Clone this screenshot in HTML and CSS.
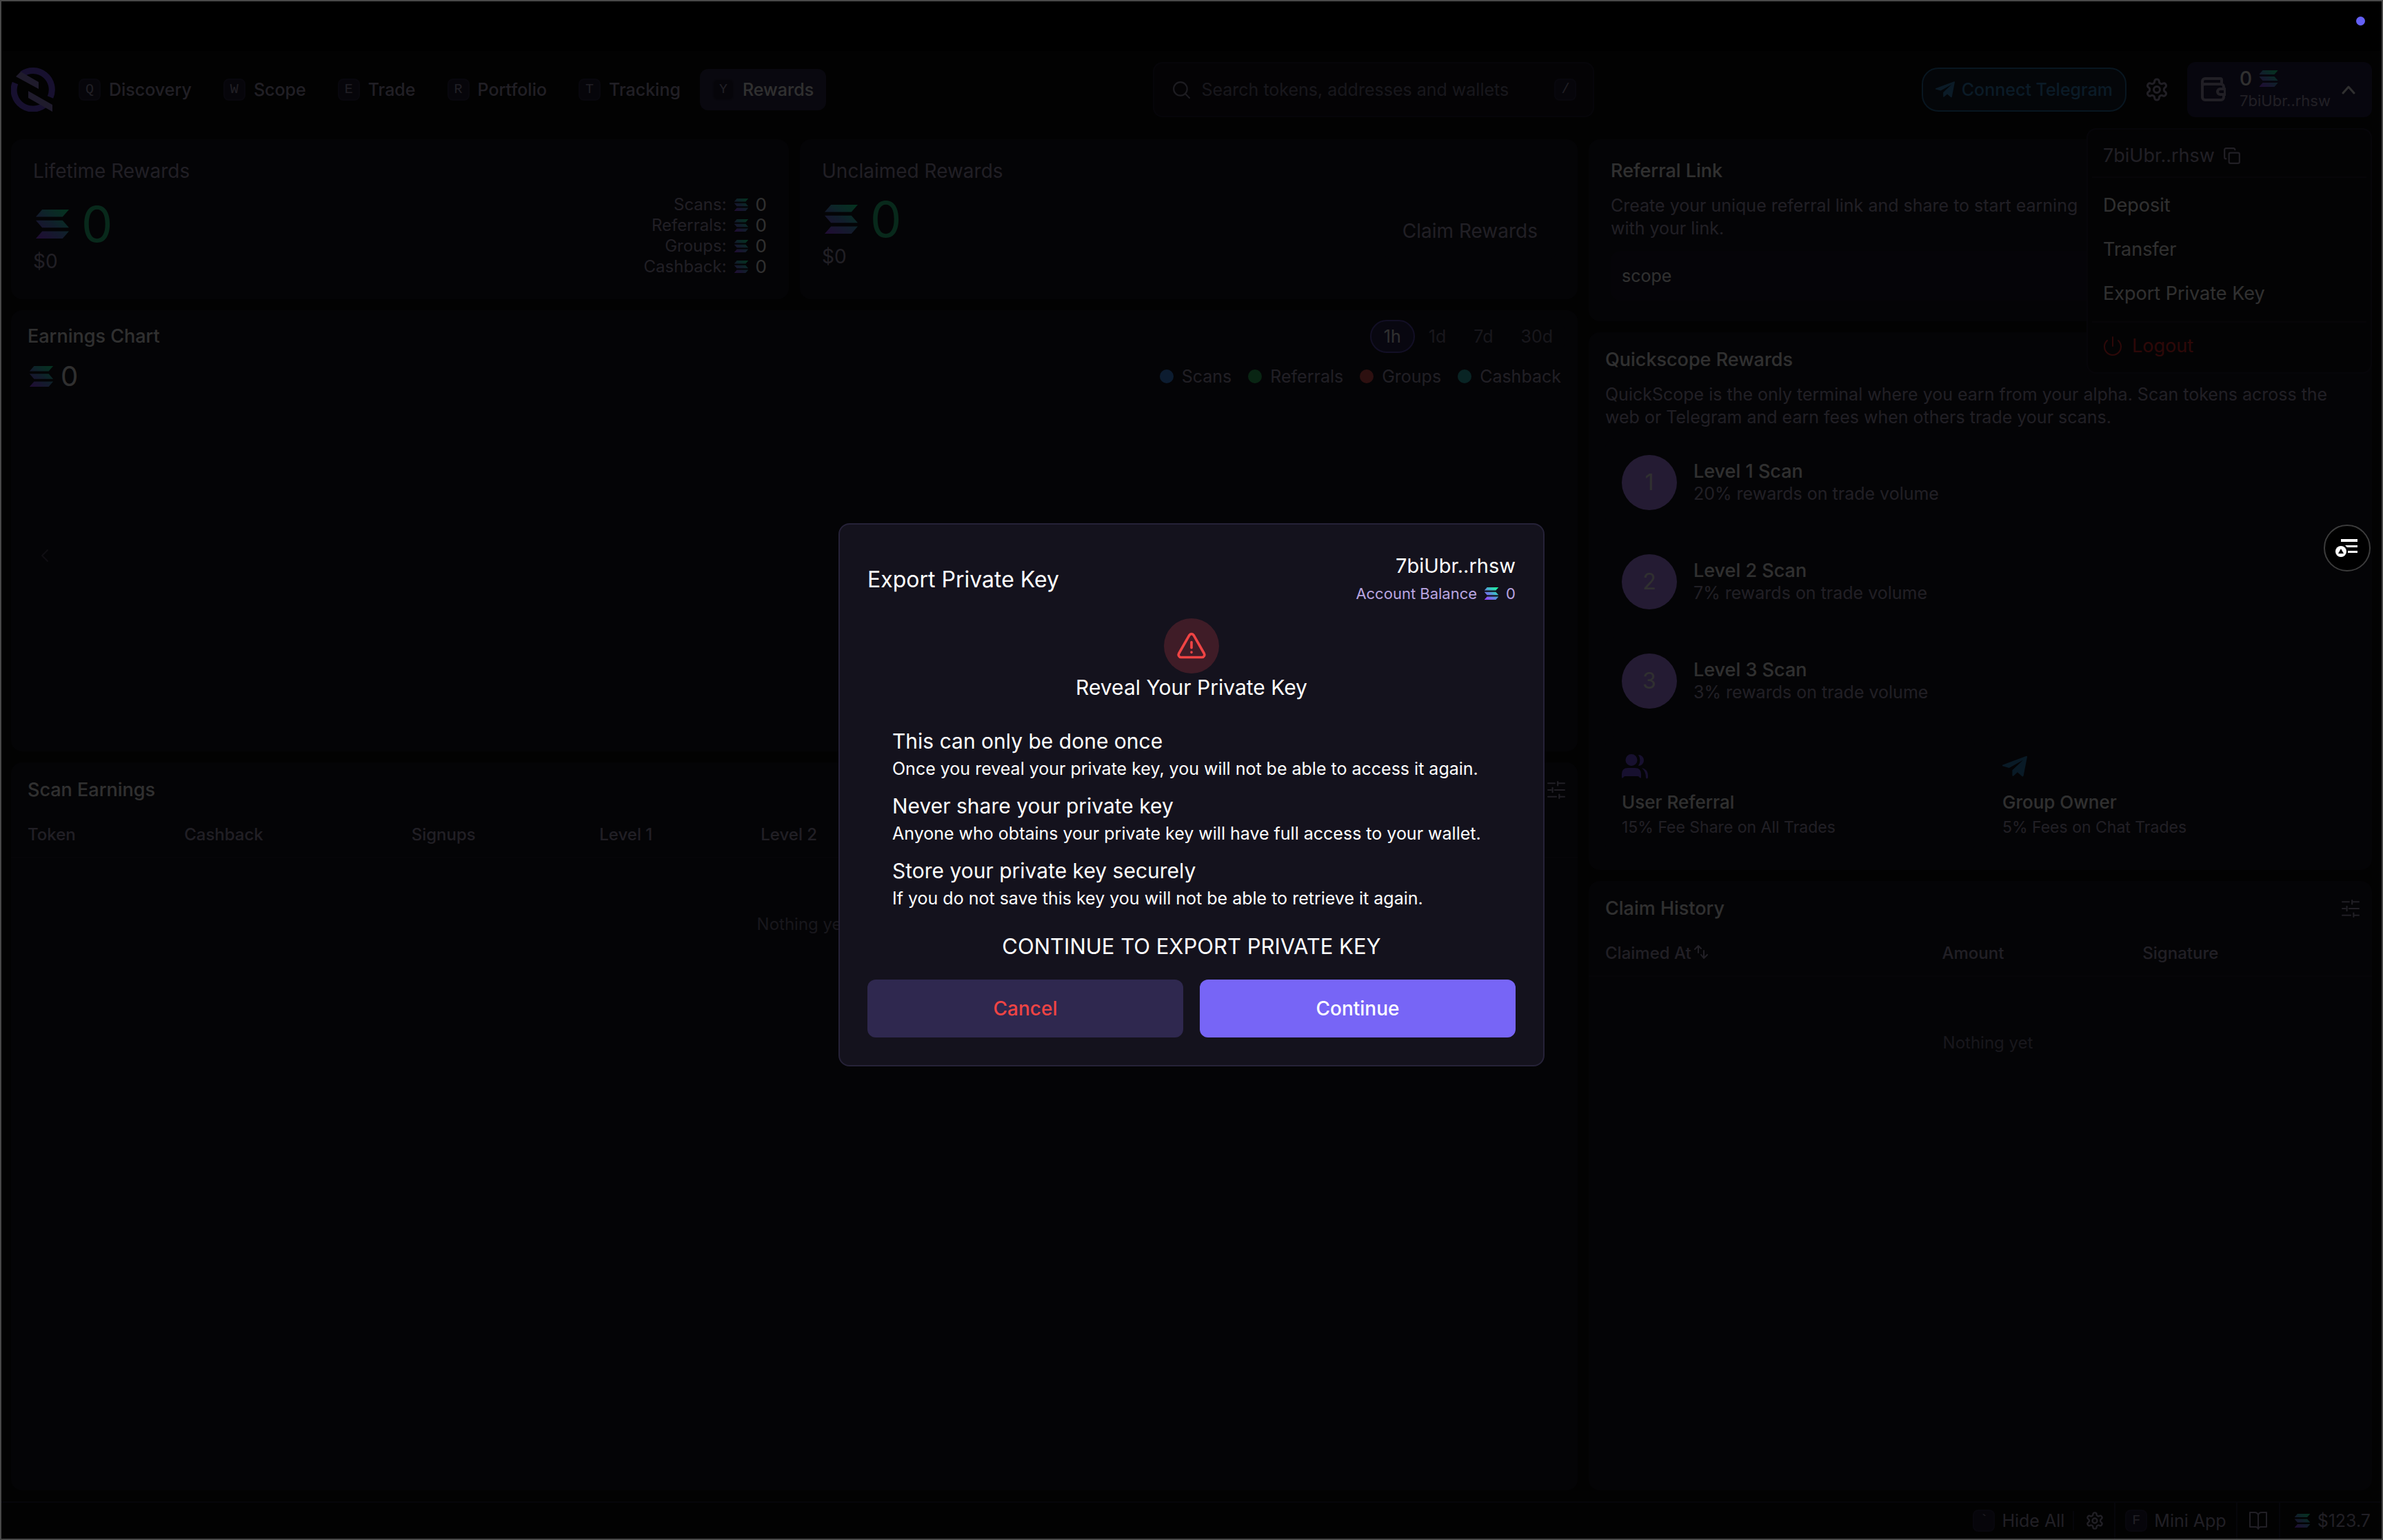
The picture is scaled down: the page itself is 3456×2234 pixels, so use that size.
FILE: index.html
```
<!DOCTYPE html>
<html lang="en">
<head>
  <meta charset="UTF-8"/>
  <meta name="viewport" content="width=device-width,initial-scale=1"/>
  <title>Rewards – QuickScope</title>
  <link rel="stylesheet" href="styles.css">
</head>
<body>

  <!-- shared icons -->
  <svg class="sprite" aria-hidden="true">
    <defs>
      <linearGradient id="solGrad" gradientUnits="userSpaceOnUse" x1="4" y1="22" x2="22" y2="0">
        <stop offset="0" stop-color="#9945ff"/>
        <stop offset="0.5" stop-color="#5497d5"/>
        <stop offset="0.6" stop-color="#43b4ca"/>
        <stop offset="1" stop-color="#19fb9b"/>
      </linearGradient>
      <symbol id="sol" viewBox="0 0 24 21">
        <path fill="url(#solGrad)" d="M4.6 0H24l-4.6 5.2H0zM0 7.9h19.4L24 13.1H4.6zM4.6 15.8H24L19.4 21H0z"/>
      </symbol>
      <symbol id="plane" viewBox="0 0 28 24">
        <path fill="currentColor" d="M0 10.2 27 .2q1-.3 1 .8l-4.2 21.4q-.4 1.4-1.5.6L17 18.4l-4.6 4.2q-1.2.6-1.2-.8V16L23.4 4.6 7.6 13.6.3 11.5q-.9-.5-.3-1.3z"/>
      </symbol>
      <symbol id="gear" viewBox="0 0 24 24">
        <path d="M12.22 2h-.44a2 2 0 0 0-2 2v.18a2 2 0 0 1-1 1.73l-.43.25a2 2 0 0 1-2 0l-.15-.08a2 2 0 0 0-2.73.73l-.22.38a2 2 0 0 0 .73 2.73l.15.1a2 2 0 0 1 1 1.72v.51a2 2 0 0 1-1 1.74l-.15.09a2 2 0 0 0-.73 2.73l.22.38a2 2 0 0 0 2.73.73l.15-.08a2 2 0 0 1 2 0l.43.25a2 2 0 0 1 1 1.73V20a2 2 0 0 0 2 2h.44a2 2 0 0 0 2-2v-.18a2 2 0 0 1 1-1.73l.43-.25a2 2 0 0 1 2 0l.15.08a2 2 0 0 0 2.73-.73l.22-.39a2 2 0 0 0-.73-2.73l-.15-.08a2 2 0 0 1-1-1.74v-.5a2 2 0 0 1 1-1.74l.15-.09a2 2 0 0 0 .73-2.73l-.22-.38a2 2 0 0 0-2.73-.73l-.15.08a2 2 0 0 1-2 0l-.43-.25a2 2 0 0 1-1-1.73V4a2 2 0 0 0-2-2z"/>
        <circle cx="12" cy="12" r="3"/>
      </symbol>
      <symbol id="sliders" viewBox="0 0 24 24">
        <path d="M1 3h9M14 3h9M14 1v5M1 12h4M10 12h13M7 9v6M1 21h11M16 21h7M16 18v5"/>
      </symbol>
    </defs>
  </svg>

  <div class="window">
    <div class="titlebar"><span class="rec-dot"></span></div>

    <div class="app">
      <header class="topbar">
        <div class="brand">
          <svg class="logo" viewBox="0 0 64 64" aria-hidden="true">
            <g fill="none" stroke="#7352ea" stroke-width="9">
              <path d="M16 9.500A27.500 27.500 0 0 1 57 43"/>
              <path d="M6 22.500A27.500 27.500 0 0 0 50 53"/>
            </g>
            <path fill="#9d89dd" d="M14 6l26 15v10L7 13zM25 34l35 20v10L25 44z"/>
          </svg>
          <nav>
            <a href="#"><kbd>Q</kbd>Discovery</a>
            <a href="#"><kbd>W</kbd>Scope</a>
            <a href="#"><kbd>E</kbd>Trade</a>
            <a href="#"><kbd>R</kbd>Portfolio</a>
            <a href="#"><kbd>T</kbd>Tracking</a>
            <a href="#" class="active"><kbd>Y</kbd>Rewards</a>
          </nav>
        </div>

        <label class="search">
          <svg class="line" viewBox="0 0 24 24" aria-hidden="true"><circle cx="11" cy="11" r="9"/><path d="M18 18l5 5"/></svg>
          <input type="text" placeholder="Search tokens, addresses and wallets" aria-label="Search"/>
          <kbd>/</kbd>
        </label>

        <div class="account">
          <button class="telegram"><svg viewBox="0 0 28 24"><use href="#plane"/></svg>Connect Telegram</button>
          <button class="icon-btn" aria-label="Settings"><svg class="line" viewBox="0 0 24 24"><use href="#gear"/></svg></button>
          <div class="wallet-wrap">
            <button class="wallet">
              <svg class="line wallet-icon" viewBox="0 0 36 36" aria-hidden="true"><path d="M6 10h23a4 4 0 0 1 4 4v2M33 25v4a4 4 0 0 1-4 4H6a4 4 0 0 1-4-4V6a4 4 0 0 1 4-4h22a2 2 0 0 1 2 2v5M2 7a3 3 0 0 0 4 3M35 17h-7a4 4 0 0 0 0 8h7z"/></svg>
              <span class="wallet-info">
                <span class="wallet-sum">0 <svg viewBox="0 0 24 21"><use href="#sol"/></svg></span>
                <span class="wallet-addr">7biUbr..rhsw</span>
              </span>
              <svg class="line chevron" viewBox="0 0 20 20" aria-hidden="true"><path d="M2 15l8-9 8 9"/></svg>
            </button>
            <div class="menu">
              <div class="menu-head">7biUbr..rhsw
                <svg class="line" viewBox="0 0 24 24" aria-hidden="true"><rect x="8" y="8" width="14" height="14" rx="2"/><path d="M4 16a2 2 0 0 1-2-2V4c0-1 1-2 2-2h10c1 0 2 1 2 2"/></svg>
              </div>
              <hr/>
              <button>Deposit</button>
              <button>Transfer</button>
              <button>Export Private Key</button>
              <hr/>
              <button class="logout"><svg class="line" viewBox="0 0 28 28"><path d="M14 1v13M6 6a12 12 0 1 0 16 0"/></svg>Logout</button>
            </div>
          </div>
        </div>
      </header>

      <main>
        <div class="col">
          <div class="cards">
            <section class="card stat">
              <h2>Lifetime Rewards</h2>
              <div class="stat-body">
                <div>
                  <p class="amount"><svg viewBox="0 0 24 21"><use href="#sol"/></svg>0</p>
                  <p class="usd">$0</p>
                </div>
                <dl class="split">
                  <div><dt>Scans:</dt><dd><svg viewBox="0 0 24 21"><use href="#sol"/></svg>0</dd></div>
                  <div><dt>Referrals:</dt><dd><svg viewBox="0 0 24 21"><use href="#sol"/></svg>0</dd></div>
                  <div><dt>Groups:</dt><dd><svg viewBox="0 0 24 21"><use href="#sol"/></svg>0</dd></div>
                  <div><dt>Cashback:</dt><dd><svg viewBox="0 0 24 21"><use href="#sol"/></svg>0</dd></div>
                </dl>
              </div>
            </section>
            <section class="card stat">
              <h2>Unclaimed Rewards</h2>
              <div class="stat-body">
                <div>
                  <p class="amount"><svg viewBox="0 0 24 21"><use href="#sol"/></svg>0</p>
                  <p class="usd">$0</p>
                </div>
                <button class="claim">Claim Rewards</button>
              </div>
            </section>
          </div>

          <section class="card chart">
            <div class="chart-top">
              <h2>Earnings Chart</h2>
              <div class="ranges">
                <button class="on">1h</button>
                <button>1d</button>
                <button>7d</button>
                <button>30d</button>
              </div>
            </div>
            <div class="chart-sub">
              <p class="chart-total"><svg viewBox="0 0 24 21"><use href="#sol"/></svg>0</p>
              <ul class="legend">
                <li class="scans">Scans</li>
                <li class="referrals">Referrals</li>
                <li class="groups">Groups</li>
                <li class="cashback">Cashback</li>
              </ul>
            </div>
            <div class="plot">
              <button class="prev" aria-label="Previous"><svg class="line" viewBox="0 0 12 20"><path d="M10 2L2 10l8 8"/></svg></button>
            </div>
          </section>

          <section class="card list">
            <div class="list-top">
              <h2>Scan Earnings</h2>
              <button class="icon-btn" aria-label="Columns"><svg class="line" viewBox="0 0 24 24"><use href="#sliders"/></svg></button>
            </div>
            <table class="scan-table">
              <thead><tr><th>Token</th><th>Cashback</th><th>Signups</th><th>Level 1</th><th>Level 2</th></tr></thead>
              <tbody><tr><td colspan="5">Nothing yet</td></tr></tbody>
            </table>
          </section>
        </div>

        <div class="col">
          <section class="card referral">
            <h2>Referral Link</h2>
            <p class="text">Create your unique referral link and share to start earning<br/>with your link.</p>
            <input type="text" value="scope" aria-label="Referral link"/>
          </section>

          <section class="card program">
            <h2>Quickscope Rewards</h2>
            <p class="text">QuickScope is the only terminal where you earn from your alpha. Scan tokens across the web or Telegram and earn fees when others trade your scans.</p>
            <div class="level"><b>1</b><div><h3>Level 1 Scan</h3><p>20% rewards on trade volume</p></div></div>
            <div class="level"><b>2</b><div><h3>Level 2 Scan</h3><p>7% rewards on trade volume</p></div></div>
            <div class="level"><b>3</b><div><h3>Level 3 Scan</h3><p>3% rewards on trade volume</p></div></div>
            <div class="shares">
              <div class="share">
                <svg class="users" viewBox="0 0 38 36" aria-hidden="true"><path fill="currentColor" d="M14 0a8.500 8.500 0 0 1 0 17A8.500 8.500 0 0 1 14 0zM24 1a8 8 0 0 1 0 16q5-8 0-16zM0 33v-4q0-9 9-9h10q9 0 9 9v4q0 3-2 1-1-2-3-2H5q-2 0-3 2-2 2-2-1zM29 20q9 2 9 11v3q-2 3-3 0 0-9-6-14z"/></svg>
                <h3>User Referral</h3>
                <p>15% Fee Share on All Trades</p>
              </div>
              <div class="share">
                <svg class="tg" viewBox="0 0 28 24" aria-hidden="true"><use href="#plane"/></svg>
                <h3>Group Owner</h3>
                <p>5% Fees on Chat Trades</p>
              </div>
            </div>
          </section>

          <section class="card list">
            <div class="list-top">
              <h2>Claim History</h2>
              <button class="icon-btn" aria-label="Columns"><svg class="line" viewBox="0 0 24 24"><use href="#sliders"/></svg></button>
            </div>
            <table class="claim-table">
              <thead><tr>
                <th>Claimed At<svg class="line sort" viewBox="0 0 20 20" aria-hidden="true"><path d="M1 6l5-5 4 4M6 1v10M10 14l4 5 5-5M14 8v10"/></svg></th>
                <th>Amount</th><th>Signature</th>
              </tr></thead>
              <tbody><tr><td colspan="3">Nothing yet</td></tr></tbody>
            </table>
          </section>
        </div>
      </main>

      <footer>
        <div class="foot-item hide-all"><button><kbd>`</kbd>Hide All</button><button class="foot-gear" aria-label="Layout settings"><svg class="line" viewBox="0 0 24 24"><use href="#gear"/></svg></button></div>
        <button class="foot-item"><kbd>F</kbd>Mini App</button>
        <a class="foot-item book" href="#" aria-label="Docs"><svg class="line" viewBox="0 0 28 28"><path d="M14 6v19M14 6q-1-4-5-4H2v21h8q3 0 4 3 1-3 4-3h8V2h-7q-4 0-5 4z"/></svg></a>
        <div class="foot-item price"><svg viewBox="0 0 24 21"><use href="#sol"/></svg>$123.7</div>
      </footer>
    </div>

    <div class="overlay">
      <div class="modal" role="dialog" aria-labelledby="modalTitle">
        <div class="modal-head">
          <h2 id="modalTitle">Export Private Key</h2>
          <div class="modal-acct">
            <p>7biUbr..rhsw</p>
            <p class="balance">Account Balance <svg viewBox="0 0 24 21"><use href="#sol"/></svg> 0</p>
          </div>
        </div>
        <div class="warn"><svg class="line" viewBox="0 0 24 24" aria-hidden="true"><path d="M10.300 3.500L2 18a2 2 0 0 0 1.700 3h16.600a2 2 0 0 0 1.700-3L13.700 3.500a2 2 0 0 0-3.400 0zM12 9v4.500M12 17v.1"/></svg></div>
        <h3 class="reveal">Reveal Your Private Key</h3>
        <div class="notes">
          <div><h4>This can only be done once</h4><p>Once you reveal your private key, you will not be able to access it again.</p></div>
          <div><h4>Never share your private key</h4><p>Anyone who obtains your private key will have full access to your wallet.</p></div>
          <div><h4>Store your private key securely</h4><p>If you do not save this key you will not be able to retrieve it again.</p></div>
        </div>
        <p class="go">CONTINUE TO EXPORT PRIVATE KEY</p>
        <div class="actions">
          <button class="cancel">Cancel</button>
          <button class="continue">Continue</button>
        </div>
      </div>
    </div>

    <button class="floater" aria-label="Open panel">
      <svg viewBox="0 0 34 30"><path fill="#fff" d="M8 2h24v4H8zM14 11h18v3H17zM18 19h14v3H18z"/><circle cx="8" cy="20" r="8" fill="#fff"/><path fill="#000" d="M8 16l4 7H4z"/></svg>
    </button>
  </div>

</body>
</html>
```
FILE: styles.css
```
*{box-sizing:border-box;margin:0;padding:0;font-family:Inter,'Liberation Sans',sans-serif}
body{background:#000;color:#f0f0f0;font-size:24px;line-height:32px}
button{background:none;border:none;color:inherit;font-size:inherit;line-height:inherit;cursor:pointer}
a{color:inherit;text-decoration:none}
svg{display:block;flex:none}
h2,h3,h4{font-weight:500}
.sprite{position:absolute;width:0;height:0}
.line{fill:none;stroke:currentColor;stroke-width:2;stroke-linecap:round;stroke-linejoin:round}

.window{position:relative;display:flex;flex-direction:column;min-height:100vh;border:2px solid #484848}
.titlebar{height:72px;padding:22px 24px;display:flex;justify-content:flex-end}
.rec-dot{width:13px;height:13px;border-radius:50%;background:#6460f6}
.app{flex:1;display:flex;flex-direction:column;background:#0a0a0c}

/* top bar */
.topbar{height:112px;padding:0 14px;display:flex;align-items:center;justify-content:space-between}
.brand,nav,nav a,.account{display:flex;align-items:center}
.brand{gap:16px}
.logo{width:64px;height:64px}
nav{gap:10px}
nav a{height:60px;padding:0 18px;gap:12px;border-radius:12px;color:#a39db9;font-size:25px;font-weight:500}
nav a.active{background:#2f2a4a;color:#f0f0f0}
kbd{width:32px;height:32px;border:2px solid #2a2442;border-radius:8px;background:#1f1a32;color:#a39db9;font:20px/28px 'Liberation Mono',monospace;text-align:center}
.search{width:640px;height:80px;padding:0 24px 0 26px;display:flex;align-items:center;gap:16px;border:2px solid #211d30;border-radius:14px;background:#14121d;color:#8f8aa3}
.search svg{width:26px;height:26px}
.search input{flex:1;min-width:0;background:none;border:none;outline:none;font-size:25px;color:#f0f0f0}
.search input::placeholder{color:#77728a;opacity:1}
.account{gap:26px}
.telegram{height:64px;padding:0 18px;display:flex;align-items:center;gap:10px;border:2px solid #2b6d9e;border-radius:24px;background:#14202e;color:#3787c4;font-size:25px;font-weight:500}
.telegram svg{width:28px;height:24px}
.icon-btn{color:#a39db9}
.icon-btn svg{width:36px;height:36px}
.wallet-wrap{position:relative}
.wallet{height:80px;padding:0 24px 0 20px;display:flex;align-items:center;border-radius:12px;background:#261f45;text-align:left}
.wallet-icon{width:36px;height:36px;margin-right:20px;color:#a39db9;stroke-width:4}
.wallet-info{display:block}
.wallet-sum{display:flex;align-items:center;gap:10px;font-size:28px;font-weight:500}
.wallet-sum svg{width:28px;height:24px}
.wallet-addr{display:block;font-size:22px;color:#a39db9}
.chevron{width:20px;height:20px;margin-left:16px;stroke-width:3}
.menu{position:absolute;z-index:1;top:96px;right:0;width:414px;padding:8px 6px 12px;border:2px solid #211d30;border-radius:14px;background:#121116;font-size:27px}
.menu-head{height:60px;padding:0 16px;display:flex;align-items:center;gap:12px;color:#a39db9}
.menu-head svg{width:26px;height:26px}
.menu hr{height:2px;border:none;background:#1e1b28;margin-bottom:8px}
.menu button{width:100%;height:64px;padding:0 16px;display:flex;align-items:center;gap:14px;text-align:left}
.menu button+hr{margin-top:8px}
.menu .logout{height:52px;color:#e02b2b}
.logout svg{width:28px;height:28px}

/* page grid */
main{flex:1;padding:16px 14px;display:grid;grid-template-columns:2fr 1fr;gap:16px}
.col{display:flex;flex-direction:column;gap:16px;min-width:0}
.card{border-radius:16px;background:#16141f}
.card h2{font-size:27px}
.cards{display:grid;grid-template-columns:1fr 1fr;gap:16px}
.card.stat{padding:30px 32px 32px}
.stat h2{font-size:28px;font-weight:400;color:#a39db9;margin-bottom:18px}
.stat-body{display:flex;justify-content:space-between;align-items:center}
.amount{display:flex;align-items:center;gap:14px;font-size:72px;line-height:72px;color:#2bcb85}
.amount svg{width:56px;height:42px}
.usd{margin-top:2px;font-size:28px;color:#a39db9}
.split div{height:30px;display:flex;align-items:center;justify-content:flex-end;gap:10px}
.split dt{color:#a39db9}
.split dd{display:flex;align-items:center;gap:10px;font-size:26px}
.split svg{width:22px;height:18px}
.claim{height:84px;padding:0 26px;border-radius:12px;background:#18171f;color:#a39db9;font-size:28px}

.chart{height:640px;display:flex;flex-direction:column}
.chart-top{padding:14px 16px 10px 24px;display:flex;justify-content:space-between;align-items:center}
.ranges{display:flex;border-radius:24px;background:#18161f;color:#77728a}
.ranges button{height:48px;padding:0 18px;border:2px solid transparent;border-radius:24px;font-size:25px}
.ranges .on{border-color:#5a4ab8;background:#2a2350;color:#f0f0f0}
.chart-sub{padding:0 24px;display:flex;justify-content:space-between;align-items:center}
.chart-total{display:flex;align-items:center;gap:8px;font-size:40px;line-height:48px}
.chart-total svg{width:40px;height:30px}
.legend{display:flex;gap:24px;list-style:none;color:#a39db9;font-size:25px}
.legend li{display:flex;align-items:center;gap:12px}
.legend li::before{content:'';width:20px;height:20px;border-radius:50%;background:currentColor}
.legend .scans::before{background:#3f8cf0}
.legend .referrals::before{background:#2fb95f}
.legend .groups::before{background:#e25050}
.legend .cashback::before{background:#2fb3b3}
.plot{flex:1;display:flex;align-items:center;padding:0 42px 48px}
.prev{color:#4a4658}
.prev svg{width:14px;height:20px}

.list{flex:1}
.list-top{padding:24px 18px 16px 24px;display:flex;justify-content:space-between;align-items:center}
.list-top svg{width:26px;height:26px}
table{width:100%;border-collapse:collapse;table-layout:fixed}
th{height:66px;padding:0 24px;border-bottom:2px solid #1f1c2a;text-align:left;font-weight:500;color:#a39db9;white-space:nowrap}
td{padding:80px 14px 80px 36px;text-align:center;color:#77728a}
.scan-table th:nth-child(1){width:10%}
.scan-table th:nth-child(2){width:14.5%}
.scan-table th:nth-child(3){width:12%}
.scan-table th:nth-child(4){width:10.3%}
.claim-table th:nth-child(1){width:43%}
.claim-table th:nth-child(2){width:25.6%}
.sort{display:inline-block;width:20px;height:20px;margin-left:4px;stroke-width:2}

.text{margin:18px 0 16px;font-size:25px;line-height:33px;color:#a39db9}
.referral{padding:30px 32px}
.referral input{width:100%;height:72px;padding:0 16px;border:none;border-radius:14px;background:#1b1828;color:#f0f0f0;font-size:25px}
.program{padding:24px}
.program .text{margin-bottom:14px}
.level{height:128px;padding:0 24px;margin-bottom:16px;display:flex;align-items:center;gap:24px;border-radius:16px;background:#181620}
.level b{width:80px;height:80px;border-radius:50%;background:#b487ff;font-size:32px;line-height:80px;font-weight:400;text-align:center}
.level h3{font-size:27px}
.level p{font-size:25px;color:#a39db9}
.shares{display:grid;grid-template-columns:1fr 1fr;gap:16px}
.share{height:170px;padding:26px 24px;border-radius:16px;background:#181620}
.share svg{height:36px;margin-bottom:18px}
.share h3{font-size:26px}
.share p{margin-top:4px;font-size:23px;color:#a39db9}
.users{width:38px;color:#7352ea}
.tg{width:36px;color:#2f83bd}

/* status bar */
footer{height:54px;display:flex;justify-content:flex-end;border-top:2px solid #221e33;color:#a39db9;font-size:25px}
.foot-item{padding:0 14px;display:flex;align-items:center;gap:10px;border-right:2px solid #221e33}
.foot-item button,.foot-item.price{display:flex;align-items:center;gap:10px}
.foot-item.price{padding:0 16px 0 20px;border-right:none}
.foot-item.book{padding:0 16px}
.foot-gear{margin-left:2px;padding-left:16px;border-left:2px solid #221e33}
footer svg{width:28px;height:28px}
footer .price svg{width:24px;height:20px}

/* export dialog */
.overlay{position:absolute;z-index:2;inset:72px 0 0;display:flex;align-items:center;justify-content:center;background:rgba(0,0,0,.8)}
.modal{width:1024px;padding:40px;border:2px solid #262238;border-radius:16px;background:#14121d;color:#fff}
.modal-head{display:flex;justify-content:space-between;align-items:center;margin-bottom:16px}
.modal-head h2{font-size:32px;font-weight:400}
.modal-acct{text-align:right;font-size:29px;line-height:40px}
.modal .balance{display:flex;align-items:center;justify-content:flex-end;gap:10px;font-size:22px;line-height:40px;color:#b9a5e0}
.balance svg{width:22px;height:18px}
.warn{width:80px;height:80px;margin:0 auto;display:flex;align-items:center;justify-content:center;border-radius:50%;background:#3f1c27;color:#ef4444}
.warn svg{width:44px;height:44px}
.reveal{font-size:30px;line-height:40px;font-weight:400;text-align:center}
.notes{padding:38px 36px 0;display:flex;flex-direction:column;gap:14px}
.notes h4{font-size:30px;line-height:40px;font-weight:400}
.notes p{font-size:25px;line-height:40px}
.go{margin:30px 0 28px;font-size:31px;line-height:40px;text-align:center}
.actions{display:grid;grid-template-columns:1fr 1fr;gap:24px}
.actions button{height:84px;border-radius:12px;background:#2f284f;font-size:28px;font-weight:500}
.actions .cancel{color:#ef4444}
.actions .continue{background:#7765f6}

.floater{position:absolute;z-index:3;top:759px;right:16px;width:68px;height:68px;display:flex;align-items:center;justify-content:center;border:2px solid #3c3c3c;border-radius:50%;background:#000}
.floater svg{width:34px;height:30px}
```
